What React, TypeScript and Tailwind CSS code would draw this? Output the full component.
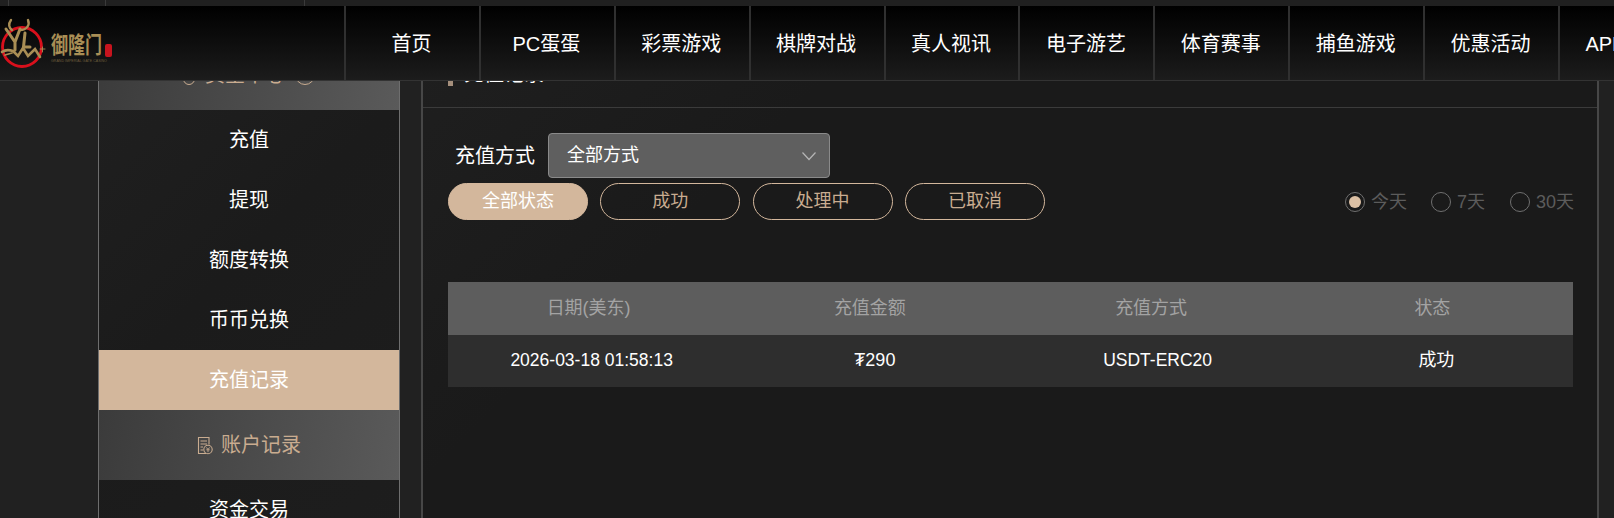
import React from "react";

const FONT = "font-['Liberation_Sans','Noto_Sans_CJK_SC',sans-serif]";
const navItems = ["首页", "PC蛋蛋", "彩票游戏", "棋牌对战", "真人视讯", "电子游艺", "体育赛事", "捕鱼游戏", "优惠活动", "APP下载"];
const fundItems = ["充值", "提现", "额度转换", "币币兑换", "充值记录"];
const pills = ["全部状态", "成功", "处理中", "已取消"];

function Logo() {
  return (
    <div className="flex items-start w-[344px] shrink-0">
      <svg width="50" height="64" viewBox="0 0 50 64" className="shrink-0 mt-[9px]">
        <circle cx="22" cy="32" r="19.5" fill="none" stroke="#d9101c" strokeWidth="2.8" />
        <g fill="none" stroke="#a98e55" strokeLinecap="round">
          <path d="M11 5C8 9 9 13 12 15" strokeWidth="2.4" />
          <path d="M6 14L15 27L20 14M15 27V35" strokeWidth="3" />
          <path d="M28 5C30 10 27 15 20 15" strokeWidth="2.4" />
          <path d="M25 18L23.5 32H30" strokeWidth="3" />
          <path d="M2 37C6 34 10 35 13 36L18 41L23 33L28 41L35 34L40 42" strokeWidth="2.6" />
          <path d="M5 40L12 38" strokeWidth="1.8" />
          <path d="M40 34H45M42.5 32V37" strokeWidth="0.9" />
        </g>
      </svg>
      <div className="flex flex-col mt-[26px] ml-px">
        <div className="flex items-end">
          <span className="text-[#a98e55] text-[17px] leading-[24px] font-bold font-['Noto_Sans_CJK_SC',sans-serif] scale-y-[1.35]">御隆门</span>
          <span className="ml-[3px] mb-[-1px] w-[7px] h-[13px] rounded-[2px] bg-[#c8141e]" />
        </div>
        <span className="text-[#6d5d3c] text-[3.6px] leading-[5px] mt-[3px] whitespace-nowrap">GRAND IMPERIAL GATE CASINO</span>
      </div>
    </div>
  );
}

function Header() {
  return (
    <div className="absolute left-0 right-0 top-0 z-10">
      <div className="h-[6px] bg-[#202020] flex">
        <span className="ml-[8px] w-px bg-[#3a3a3a]" />
        <span className="ml-[96px] w-px bg-[#3a3a3a]" />
        <span className="ml-[198px] w-px bg-[#3a3a3a]" />
      </div>
      <div className="flex h-[75px] border-b border-[#333] bg-[linear-gradient(180deg,#000_0%,#1c1c1c_100%)] overflow-hidden">
        <Logo />
        {navItems.map((n) => (
          <div key={n} className="w-[134.9px] shrink-0 border-l-2 border-[#303030] flex items-center justify-center pr-[2px] pt-[2px] text-white text-[20px] whitespace-nowrap">
            {n}
          </div>
        ))}
      </div>
    </div>
  );
}

function CoinDoc() {
  return (
    <svg width="16" height="19" viewBox="0 0 16 19" fill="none" stroke="#c9ac90" strokeWidth="1.1">
      <path d="M9 17.5H1.5V1.5h10.5v7" />
      <path d="M3.5 5h6.5M3.5 8h6.5M3.5 11h2.5M3.5 14h2.5" />
      <circle cx="11" cy="13.5" r="4.2" />
      <path d="M9.3 11.4l1.7 2 1.7-2M9.3 13.8h3.4M11 13.5v2.6" strokeWidth="0.9" />
    </svg>
  );
}

function Sidebar() {
  return (
    <aside className="w-[302px] ml-[98px] shrink-0 border-x border-[#6e6e6e] bg-[linear-gradient(135deg,#202020_0%,#1b1b1b_40%,#1e1e1e_100%)]">
      <div className="h-[70px] flex items-center justify-center gap-[10px] text-[#c9ac90] text-[20px] bg-[linear-gradient(100deg,#3b3b3b_0%,#5a5a5a_100%)]">
        <span className="w-[12px] h-[20px] rounded-full border border-[#c9ac90]" />
        <span>资金中心</span>
        <span className="w-[20px] h-[20px] rounded-full border border-[#c9ac90]" />
      </div>
      {fundItems.map((n) => (
        <div
          key={n}
          className={`h-[60px] flex items-center justify-center text-white text-[20px] ${n === "充值记录" ? "bg-[#d3b79c]" : ""}`}
        >
          {n}
        </div>
      ))}
      <div className="h-[70px] flex items-center justify-center gap-[8px] text-[#c9ac90] text-[20px] bg-[linear-gradient(100deg,#3b3b3b_0%,#5a5a5a_100%)]">
        <CoinDoc />
        <span>账户记录</span>
      </div>
      <div className="h-[60px] flex items-center justify-center text-white text-[20px]">资金交易</div>
    </aside>
  );
}

function Radio({ label, checked, gap }: { label: string; checked?: boolean; gap: string }) {
  return (
    <div className={`flex items-center gap-[6px] ${gap}`}>
      <span className="w-[20px] h-[20px] rounded-full border-[1.5px] border-[#6f6f6f] flex items-center justify-center">
        {checked && <span className="w-[12px] h-[12px] rounded-full bg-[#dcc0a4]" />}
      </span>
      <span className="text-[#5c5c5c] text-[18px] leading-[20px]">{label}</span>
    </div>
  );
}

function Main() {
  return (
    <main className="w-[1178px] ml-[21px] h-[600px] border-x-2 border-[#474747] bg-[linear-gradient(135deg,#1f1f1f_0%,#1a1a1a_25%)]">
      <div className="h-[68px] border-b border-[#3b3b3b] pl-[25px] flex items-start">
        <span className="w-[5px] h-[23px] mt-[23px] bg-[#a58f7c]" />
        <span className="ml-[11px] mt-[22px] text-white text-[20px] leading-[24px]">充值记录</span>
      </div>
      <div className="pl-[25px] pr-[24px]">
        <div className="flex items-center mt-[25px] ml-[7px] gap-[13px]">
          <span className="text-white text-[20px]">充值方式</span>
          <div className="w-[282px] h-[45px] rounded-[4px] border border-[#8a8a8a] bg-[#5f5f5f] flex items-center justify-between pl-[18px] pr-[12px]">
            <span className="text-white text-[18px]">全部方式</span>
            <svg width="16" height="10" viewBox="0 0 16 10" fill="none" stroke="#b5b5b5" strokeWidth="1.2">
              <path d="M1.5 1.5L8 8.5l6.5-7" />
            </svg>
          </div>
        </div>
        <div className="flex items-center mt-[5px]">
          <div className="flex gap-[12.3px]">
            {pills.map((p, i) => (
              <div
                key={p}
                className={`w-[140px] h-[37px] rounded-full border border-[#d3b79c] flex items-center justify-center text-[18px] ${i === 0 ? "bg-[#d3b79c] text-white" : "text-[#c9ac90]"}`}
              >
                {p}
              </div>
            ))}
          </div>
          <div className="ml-auto flex mr-[-1px]">
            <Radio label="今天" checked gap="" />
            <Radio label="7天" gap="ml-[24px]" />
            <Radio label="30天" gap="ml-[25px]" />
          </div>
        </div>
        <div className="mt-[62px]">
          <div className="grid grid-cols-4 h-[53px] items-center text-center bg-[#5d5d5d] text-[#a3a3a3] text-[18px]">
            <span>日期(美东)</span>
            <span>充值金额</span>
            <span>充值方式</span>
            <span>状态</span>
          </div>
          <div className="grid grid-cols-4 h-[52px] items-center text-center bg-[#2e2e2e] text-white text-[18px] pb-[2px]">
            <span className="pl-[6px] text-[17.5px]">2026-03-18 01:58:13</span>
            <span className="pl-[10px]">₮290</span>
            <span className="pl-[13px] text-[17.5px]">USDT-ERC20</span>
            <span className="pl-[8px]">成功</span>
          </div>
        </div>
      </div>
    </main>
  );
}

export default function App() {
  return (
    <div className={`${FONT} relative h-[518px] w-full overflow-hidden bg-[#212121]`}>
      <Header />
      <div className="flex pt-[40px]">
        <Sidebar />
        <Main />
      </div>
    </div>
  );
}
